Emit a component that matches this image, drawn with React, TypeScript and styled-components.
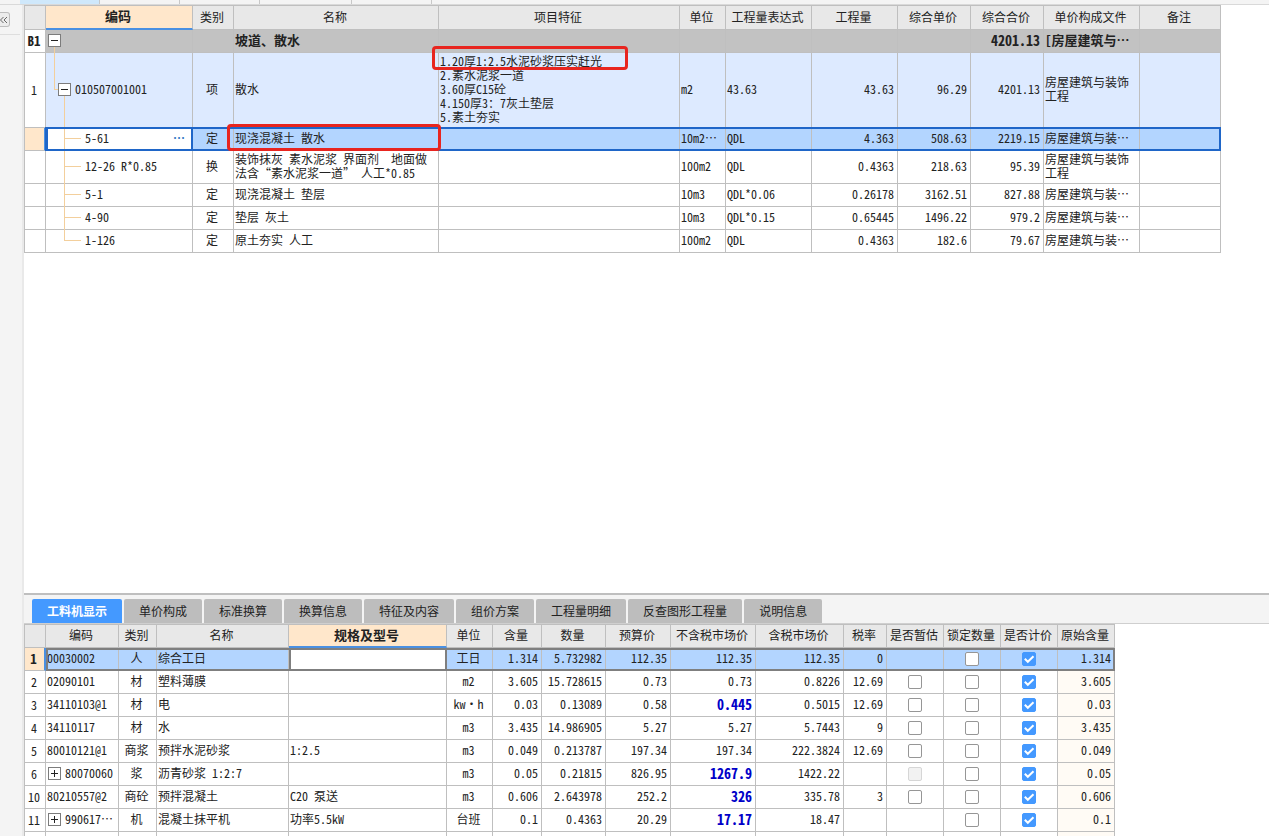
import React from "react";
import styled, { createGlobalStyle, css } from "styled-components";

const LINE = "#bfbfbf";
const BRANCH = "#f3cf9c";
const ACCENT = "#4499ff";

const GlobalStyle = createGlobalStyle`
  * { box-sizing: border-box; }
  html, body, #root { margin: 0; height: 100%; }
  body {
    overflow: hidden;
    background: #fff;
    color: #222;
    font: 12px/14px "Noto Sans Mono CJK SC", "Noto Sans CJK SC", sans-serif;
  }
`;

const Page = styled.div`
  display: flex;
  flex-direction: column;
  height: 100vh;
  overflow: hidden;
`;

const DocTabs = styled.div`
  display: flex;
  flex: none;
  height: 5px;
  padding-left: 20px;
  background: #f4f4f4;
  border-bottom: 1px solid #d9d9d9;
`;

const DocTab = styled.span<{ $width: number; $active?: boolean }>`
  width: ${(p) => p.$width}px;
  border-right: 1px solid #c8c8c8;
  background: ${(p) => (p.$active ? "#cfe8fb" : "#f4f4f4")};
`;

const Body = styled.div`
  display: flex;
  flex: 1;
  min-height: 0;
`;

const Rail = styled.aside`
  flex: none;
  width: 24px;
  background: #f4f4f4;
  border-right: 2px solid #e9e9e9;
`;

const RailHead = styled.div`
  height: 30px;
  margin-right: 2px;
  padding-top: 7px;
  border-bottom: 1px solid #dedede;
`;

const RailButton = styled.button`
  display: flex;
  align-items: center;
  justify-content: flex-end;
  width: 10px;
  height: 15px;
  padding: 0 1px 0 0;
  border: 1px solid #bdbdbd;
  border-left: 0;
  border-radius: 0 3px 3px 0;
  background: #ececec;
  overflow: hidden;
`;

const Main = styled.main`
  display: flex;
  flex: 1;
  flex-direction: column;
  min-width: 0;
`;

const TopPane = styled.section`
  flex: 1;
  min-height: 0;
  overflow: hidden;
`;

const BottomPane = styled.section`
  flex: none;
  height: 243px;
  overflow: hidden;
  border-top: 2px solid ${LINE};
`;

const TabStrip = styled.nav`
  display: flex;
  align-items: flex-end;
  gap: 2px;
  height: 29px;
  padding: 0 8px;
  background: #f4f4f4;
  border-bottom: 1px solid #cfcfcf;
`;

const Tab = styled.button<{ $active?: boolean }>`
  height: 24px;
  padding: 0 15px;
  border: 0;
  border-radius: 2px 2px 0 0;
  background: ${(p) => (p.$active ? ACCENT : "#bdbdbd")};
  color: ${(p) => (p.$active ? "#fff" : "#222")};
  font: ${(p) => (p.$active ? 700 : 400)} 12px/24px "Noto Sans CJK SC", sans-serif;
  white-space: nowrap;
`;

const Grid = styled.table`
  table-layout: fixed;
  width: 0;
  border-collapse: separate;
  border-spacing: 0;
  border-left: 1px solid ${LINE};
`;

const HeadCell = styled.th<{ $current?: boolean; $height: number }>`
  height: ${(p) => p.$height}px;
  padding: 0 2px 2px 0;
  border: solid ${LINE};
  border-width: 1px 1px 1px 0;
  background: #e8e8e8;
  font-weight: 400;
  white-space: nowrap;
  ${(p) =>
    p.$current &&
    css`
      border-bottom: 2px solid #4a90e2;
      background: #ffe7cb;
      font-size: 13px;
      font-weight: 700;
    `}
`;

type Tone = "plain" | "section" | "item" | "selected";
const tones: Record<Tone, string> = {
  plain: "#fff",
  section: "#c2c2c2",
  item: "#ddeaff",
  selected: "#b3d5ff",
};

const Row = styled.tr<{ $height?: number; $tone?: Tone; $frame?: string; $raised?: boolean }>`
  position: relative;
  height: ${(p) => p.$height ?? 23}px;
  background: ${(p) => tones[p.$tone ?? "plain"]};
  font-size: ${(p) => (p.$tone === "section" ? 13 : 12)}px;
  font-weight: ${(p) => (p.$tone === "section" ? 700 : 400)};
  ${(p) =>
    p.$frame &&
    css`
      &::after {
        content: "";
        position: absolute;
        inset: ${p.$raised ? "-1px" : "0"} 0 0 21px;
        border: 2px solid ${p.$frame};
        pointer-events: none;
      }
    `}
`;

const Cell = styled.td<{ $align?: "left" | "center" | "right"; $bg?: string; $strong?: boolean; $changed?: boolean }>`
  position: relative;
  padding: 0 3px 2px 1px;
  border: solid ${LINE};
  border-width: 0 1px 1px 0;
  background: ${(p) => p.$bg ?? "transparent"};
  text-align: ${(p) => p.$align ?? "left"};
  white-space: pre;
  ${(p) =>
    (p.$strong || p.$changed) &&
    css`
      color: ${p.$changed ? "#0000c8" : "inherit"};
      font-size: 14px;
      font-weight: 700;
    `}
`;

const RowHead = styled.th<{ $current?: boolean; $strong?: boolean }>`
  padding: 0 2px 0 0;
  border: solid ${LINE};
  border-width: 0 1px 1px 0;
  background: #fff;
  font-size: ${(p) => (p.$strong ? 13 : 12)}px;
  font-weight: ${(p) => (p.$strong ? 700 : 400)};
  ${(p) =>
    p.$current &&
    css`
      border-right: 2px solid #4a90e2;
      background: #ffe7cb;
    `}
`;

const CodeCell = styled(Cell)<{ $editing?: boolean }>`
  ${(p) =>
    p.$editing &&
    css`
      background: #fff;
      &::after {
        content: "";
        position: absolute;
        inset: -1px -1px -1px -1px;
        border: 2px solid #1f66c8;
        pointer-events: none;
      }
    `}
`;

const CheckCell = styled(Cell)`
  padding: 0 2px 2px;
  text-align: center;
`;

const CodeLine = styled.div<{ $indent: number }>`
  display: flex;
  align-items: center;
  gap: 4px;
  padding-left: ${(p) => p.$indent}px;
`;

const Toggle = styled.button`
  position: relative;
  z-index: 1;
  flex: none;
  display: grid;
  place-items: center;
  width: 13px;
  height: 13px;
  padding: 0;
  border: 1px solid #7c7c7c;
  background: #fff;
`;

/* A stem runs down from a parent's toggle to its children. */
const Stem = styled.i<{ $x: number; $from?: string; $to?: string }>`
  position: absolute;
  left: ${(p) => p.$x}px;
  top: ${(p) => p.$from ?? "0"};
  bottom: ${(p) => p.$to ?? "-1px"};
  width: 1px;
  background: ${BRANCH};
`;

const Twig = styled.i<{ $x: number; $length: number }>`
  position: absolute;
  left: ${(p) => p.$x}px;
  bottom: 50%;
  width: ${(p) => p.$length}px;
  height: 1px;
  background: ${BRANCH};
`;

const MoreButton = styled.button`
  margin-left: auto;
  margin-right: 4px;
  padding: 0;
  border: 0;
  background: none;
  color: #3277c4;
  font: 700 12px/14px "Noto Sans CJK SC", sans-serif;
`;

const Marker = styled.span<{ $left: number; $top: number; $width: number; $height: number }>`
  position: absolute;
  z-index: 2;
  left: ${(p) => p.$left}px;
  top: ${(p) => p.$top}px;
  width: ${(p) => p.$width}px;
  height: ${(p) => p.$height}px;
  border: 3px solid #e8251f;
  border-radius: 4px;
  pointer-events: none;
`;

const CellInput = styled.input`
  display: block;
  position: relative;
  z-index: 1;
  width: 100%;
  height: 23px;
  border: 2px solid #7f7f7f;
  background: #fff;
  font: inherit;
  outline: 0;
`;

const InputCell = styled(Cell)`
  padding: 0;
  border: 0;
`;

const CheckLabel = styled.label`
  display: inline-grid;
  vertical-align: middle;
  & > * { grid-area: 1 / 1; }
  & > svg { pointer-events: none; }
`;

const CheckInput = styled.input`
  appearance: none;
  width: 14px;
  height: 14px;
  margin: 0;
  border: 1px solid #969696;
  border-radius: 2px;
  background: #fff;
  &:checked { border-color: ${ACCENT}; background: ${ACCENT}; }
  &:disabled { border-color: #d6d6d6; background: #f2f2f2; }
`;

function Check({ state, label }: { state: Flag; label: string }) {
  if (state === "none") return null;
  return (
    <CheckLabel>
      <CheckInput type="checkbox" aria-label={label} defaultChecked={state === "on"} disabled={state === "locked"} />
      {state === "on" && (
        <svg width="14" height="14" viewBox="0 0 14 14" fill="none" stroke="#fff" strokeWidth="2">
          <path d="M2.8 6.8 5.8 9.8 11.5 4.2" />
        </svg>
      )}
    </CheckLabel>
  );
}

function ToggleBox({ open }: { open: boolean }) {
  return (
    <Toggle aria-label={open ? "收起" : "展开"}>
      <svg width="9" height="9" viewBox="0 0 9 9" stroke="#222" fill="none">
        <path d={open ? "M1 4.5H8" : "M1 4.5H8M4.5 1V8"} />
      </svg>
    </Toggle>
  );
}

const itemCols: [string, number][] = [
  ["", 21], ["编码", 147], ["类别", 41], ["名称", 205], ["项目特征", 241], ["单位", 46],
  ["工程量表达式", 86], ["工程量", 86], ["综合单价", 73], ["综合合价", 73], ["单价构成文件", 96], ["备注", 81],
];

interface Item {
  no?: string;
  code: string;
  kind: string;
  name: string;
  feature?: string;
  unit: string;
  expr: string;
  qty: string;
  price: string;
  total: string;
  file: string;
  height?: number;
  tone?: Tone;
  level: 0 | 1 | 2;
  last?: boolean;
}

const items: Item[] = [
  { no: "B1", code: "", kind: "", name: "坡道、散水", unit: "", expr: "", qty: "", price: "", total: "4201.13", file: "[房屋建筑与…", tone: "section", level: 0 },
  {
    no: "1", code: "010507001001", kind: "项", name: "散水",
    feature: "1.20厚1:2.5水泥砂浆压实赶光\n2.素水泥浆一道\n3.60厚C15砼\n4.150厚3：7灰土垫层\n5.素土夯实",
    unit: "m2", expr: "43.63", qty: "43.63", price: "96.29", total: "4201.13", file: "房屋建筑与装饰\n工程", height: 75, tone: "item", level: 1,
  },
  { code: "5-61", kind: "定", name: "现浇混凝土 散水", unit: "10m2…", expr: "QDL", qty: "4.363", price: "508.63", total: "2219.15", file: "房屋建筑与装…", tone: "selected", level: 2 },
  { code: "12-26 R*0.85", kind: "换", name: "装饰抹灰 素水泥浆 界面剂  地面做\n法含“素水泥浆一道” 人工*0.85", unit: "100m2", expr: "QDL", qty: "0.4363", price: "218.63", total: "95.39", file: "房屋建筑与装饰\n工程", height: 33, level: 2 },
  { code: "5-1", kind: "定", name: "现浇混凝土 垫层", unit: "10m3", expr: "QDL*0.06", qty: "0.26178", price: "3162.51", total: "827.88", file: "房屋建筑与装…", level: 2 },
  { code: "4-90", kind: "定", name: "垫层 灰土", unit: "10m3", expr: "QDL*0.15", qty: "0.65445", price: "1496.22", total: "979.2", file: "房屋建筑与装…", level: 2 },
  { code: "1-126", kind: "定", name: "原土夯实 人工", unit: "100m2", expr: "QDL", qty: "0.4363", price: "182.6", total: "79.67", file: "房屋建筑与装…", level: 2, last: true },
];

function ItemCode({ item }: { item: Item }) {
  const selected = item.tone === "selected";
  return (
    <CodeCell $editing={selected}>
      {item.level === 0 && <Stem $x={8} $from="17px" />}
      {item.level === 1 && (
        <>
          <Stem $x={8} $to="50%" />
          <Twig $x={8} $length={5} />
          <Stem $x={18} $from="50%" />
        </>
      )}
      {item.level === 2 && (
        <>
          <Stem $x={18} $to={item.last ? "50%" : undefined} />
          <Twig $x={18} $length={17} />
        </>
      )}
      <CodeLine $indent={[1, 11, 38][item.level]}>
        {item.level < 2 && <ToggleBox open />}
        {item.code}
        {selected && <MoreButton aria-label="更多">…</MoreButton>}
      </CodeLine>
    </CodeCell>
  );
}

function ItemTable() {
  return (
    <Grid>
      <colgroup>
        {itemCols.map(([name, width]) => <col key={name} width={width} />)}
      </colgroup>
      <thead>
        <tr>
          {itemCols.map(([name]) => (
            <HeadCell key={name} $height={25} $current={name === "编码"}>{name}</HeadCell>
          ))}
        </tr>
      </thead>
      <tbody>
        {items.map((it) => {
          const selected = it.tone === "selected";
          return (
            <Row key={it.code} $height={it.height} $tone={it.tone} $frame={selected ? "#1f66c8" : undefined} $raised>
              <RowHead $current={selected} $strong={it.level === 0}>{it.no}</RowHead>
              <ItemCode item={it} />
              <Cell $align="center">{it.kind}</Cell>
              <Cell>
                {it.name}
                {selected && <Marker $left={-7} $top={-4} $width={214} $height={27} />}
              </Cell>
              <Cell>
                {it.feature}
                {it.feature && <Marker $left={-7} $top={-7} $width={196} $height={24} />}
              </Cell>
              <Cell>{it.unit}</Cell>
              <Cell>{it.expr}</Cell>
              <Cell $align="right">{it.qty}</Cell>
              <Cell $align="right">{it.price}</Cell>
              <Cell $align="right" $strong={it.level === 0}>{it.total}</Cell>
              <Cell>{it.file}</Cell>
              <Cell />
            </Row>
          );
        })}
      </tbody>
    </Grid>
  );
}

const partCols: [string, number][] = [
  ["", 21], ["编码", 73], ["类别", 38], ["名称", 132], ["规格及型号", 158], ["单位", 46], ["含量", 49], ["数量", 64],
  ["预算价", 65], ["不含税市场价", 85], ["含税市场价", 88], ["税率", 43], ["是否暂估", 57], ["锁定数量", 57], ["是否计价", 57], ["原始含量", 57],
];

type Flag = "none" | "off" | "on" | "locked";

interface Part {
  no: string;
  code: string;
  group?: boolean;
  kind: string;
  name: string;
  spec: string;
  unit: string;
  nums: [string, string, string, string, string, string];
  changed?: boolean;
  estimate: Flag;
  origin: string;
}

const parts: Part[] = [
  { no: "1", code: "00030002", kind: "人", name: "综合工日", spec: "", unit: "工日", nums: ["1.314", "5.732982", "112.35", "112.35", "112.35", "0"], estimate: "none", origin: "1.314" },
  { no: "2", code: "02090101", kind: "材", name: "塑料薄膜", spec: "", unit: "m2", nums: ["3.605", "15.728615", "0.73", "0.73", "0.8226", "12.69"], estimate: "off", origin: "3.605" },
  { no: "3", code: "34110103@1", kind: "材", name: "电", spec: "", unit: "kw·h", nums: ["0.03", "0.13089", "0.58", "0.445", "0.5015", "12.69"], changed: true, estimate: "off", origin: "0.03" },
  { no: "4", code: "34110117", kind: "材", name: "水", spec: "", unit: "m3", nums: ["3.435", "14.986905", "5.27", "5.27", "5.7443", "9"], estimate: "off", origin: "3.435" },
  { no: "5", code: "80010121@1", kind: "商浆", name: "预拌水泥砂浆", spec: "1:2.5", unit: "m3", nums: ["0.049", "0.213787", "197.34", "197.34", "222.3824", "12.69"], estimate: "off", origin: "0.049" },
  { no: "6", code: "80070060", group: true, kind: "浆", name: "沥青砂浆 1:2:7", spec: "", unit: "m3", nums: ["0.05", "0.21815", "826.95", "1267.9", "1422.22", ""], changed: true, estimate: "locked", origin: "0.05" },
  { no: "10", code: "80210557@2", kind: "商砼", name: "预拌混凝土", spec: "C20 泵送", unit: "m3", nums: ["0.606", "2.643978", "252.2", "326", "335.78", "3"], changed: true, estimate: "off", origin: "0.606" },
  { no: "11", code: "990617…", group: true, kind: "机", name: "混凝土抹平机", spec: "功率5.5kW", unit: "台班", nums: ["0.1", "0.4363", "20.29", "17.17", "18.47", ""], changed: true, estimate: "none", origin: "0.1" },
];

function PartTable() {
  return (
    <Grid>
      <colgroup>
        {partCols.map(([name, width]) => <col key={name} width={width} />)}
      </colgroup>
      <thead>
        <tr>
          {partCols.map(([name]) => (
            <HeadCell key={name} $height={24} $current={name === "规格及型号"}>{name}</HeadCell>
          ))}
        </tr>
      </thead>
      <tbody>
        {parts.map((p, i) => {
          const selected = i === 0;
          return (
            <Row key={p.no} $tone={selected ? "selected" : "plain"} $frame={selected ? "#7f7f7f" : undefined}>
              <RowHead $current={selected} $strong={selected}>{p.no}</RowHead>
              <Cell>
                <CodeLine $indent={p.group ? 1 : 0}>
                  {p.group && <ToggleBox open={false} />}
                  {p.code}
                </CodeLine>
              </Cell>
              <Cell $align="center">{p.kind}</Cell>
              <Cell>{p.name}</Cell>
              {selected ? (
                <InputCell><CellInput aria-label="规格及型号" /></InputCell>
              ) : (
                <Cell>{p.spec}</Cell>
              )}
              <Cell $align="center">{p.unit}</Cell>
              {p.nums.map((n, c) => (
                <Cell key={c} $align="right" $changed={p.changed && c === 3}>{n}</Cell>
              ))}
              <CheckCell><Check state={p.estimate} label={`${p.name} 是否暂估`} /></CheckCell>
              <CheckCell><Check state="off" label={`${p.name} 锁定数量`} /></CheckCell>
              <CheckCell><Check state="on" label={`${p.name} 是否计价`} /></CheckCell>
              <Cell $align="right" $bg={selected ? undefined : "#fffbf5"}>{p.origin}</Cell>
            </Row>
          );
        })}
        <Row>
          <RowHead />
          {partCols.slice(1).map(([name]) => (
            <Cell key={name} $bg={name === "原始含量" ? "#fffbf5" : undefined} />
          ))}
        </Row>
      </tbody>
    </Grid>
  );
}

const tabs = ["工料机显示", "单价构成", "标准换算", "换算信息", "特征及内容", "组价方案", "工程量明细", "反查图形工程量", "说明信息"];

export default function App() {
  return (
    <Page lang="zh-CN">
      <GlobalStyle />
      <DocTabs>
        <DocTab $width={80} $active />
        <DocTab $width={80} />
        <DocTab $width={80} />
        <DocTab $width={92} />
        <DocTab $width={80} />
      </DocTabs>
      <Body>
        <Rail>
          <RailHead>
            <RailButton aria-label="展开侧栏">
              <svg width="8" height="8" viewBox="0 0 8 8" fill="none" stroke="#666">
                <path d="M3.5 1 .5 4l3 3M7 1 4 4l3 3" />
              </svg>
            </RailButton>
          </RailHead>
        </Rail>
        <Main>
          <TopPane>
            <ItemTable />
          </TopPane>
          <BottomPane>
            <TabStrip>
              {tabs.map((t, i) => <Tab key={t} $active={i === 0}>{t}</Tab>)}
            </TabStrip>
            <PartTable />
          </BottomPane>
        </Main>
      </Body>
    </Page>
  );
}
